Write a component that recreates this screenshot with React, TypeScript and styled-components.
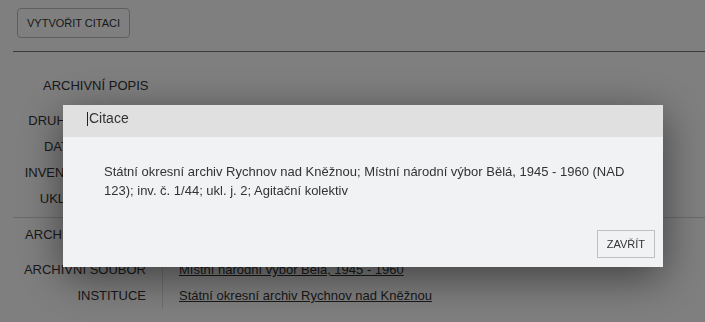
import React from "react";
import styled, { createGlobalStyle } from "styled-components";

const GlobalStyle = createGlobalStyle`
  html, body {
    margin: 0;
    padding: 0;
    background: #ffffff;
    font-family: "Liberation Sans", Arial, sans-serif;
    color: #333333;
  }
  * { box-sizing: border-box; }
`;

const Page = styled.div`
  padding: 8px 0 0 13px;
  min-height: 322px;
`;

const Toolbar = styled.div`
  display: flex;
  padding-left: 4px;
  margin-bottom: 13px;
`;

const OutlineButton = styled.button`
  height: 30px;
  padding: 0 9px;
  border: 1px solid #bdbdbd;
  border-radius: 4px;
  background: #ffffff;
  font-family: "Liberation Sans", Arial, sans-serif;
  font-size: 11px;
  color: #333333;
  cursor: pointer;
`;

const Rule = styled.div<{ $color: string }>`
  height: 1px;
  background: ${(p) => p.$color};
`;

const Heading = styled.div`
  margin: 26px 0 15px 30px;
  font-size: 13px;
  line-height: 15px;
  color: #333333;
`;

const Section = styled.div<{ $top: number; $bottom: number }>`
  display: flex;
  flex-direction: column;
  padding-top: ${(p) => p.$top}px;
  padding-bottom: ${(p) => p.$bottom}px;
`;

const Row = styled.div<{ $gap?: number }>`
  display: grid;
  grid-template-columns: 150px 1fr;
  margin-top: ${(p) => p.$gap ?? 0}px;
  font-size: 13px;
  line-height: 26px;
`;

const Label = styled.div`
  text-align: right;
  padding-right: 16px;
  border-right: 1px solid #dddddd;
  white-space: nowrap;
  color: #333333;
`;

const Value = styled.div`
  padding-left: 16px;
  color: #333333;
`;

const LinkValue = styled.a`
  color: #333333;
  text-decoration: underline;
`;

const Overlay = styled.div`
  position: fixed;
  inset: 0;
  background: rgba(0, 0, 0, 0.5);
`;

const Modal = styled.div`
  margin: 105px 0 0 63px;
  width: 600px;
  background: #f1f2f4;
  box-shadow: 0 10px 40px rgba(0, 0, 0, 0.5);
`;

const ModalHeader = styled.div`
  height: 32px;
  padding: 1px 24px 0;
  background: #dfe0df;
  font-size: 14px;
  line-height: 24px;
  color: #333333;
`;

const Caret = styled.span`
  display: inline-block;
  width: 1px;
  height: 14px;
  margin-right: 1px;
  background: #222222;
  vertical-align: -3px;
`;

const ModalBody = styled.div`
  padding: 25px 34px 0 41px;
  font-size: 13px;
  line-height: 19px;
  color: #333333;
`;

const ModalFooter = styled.div`
  display: flex;
  justify-content: flex-end;
  padding: 30px 8px 9px;
`;

const SquareButton = styled.button`
  height: 28px;
  padding: 0 9px;
  border: 1px solid #c0c0c0;
  border-radius: 0;
  background: #f1f2f4;
  font-family: "Liberation Sans", Arial, sans-serif;
  font-size: 11px;
  color: #333333;
  cursor: pointer;
`;

const firstRows = [
  "DRUH ARCHIVÁLIE",
  "DATACE VZNIKU",
  "INVENTÁRNÍ ČÍSLO",
  "UKLÁDACÍ JEDN.",
];
const firstValues = ["Písemnost", "1945 - 1960", "1/44", "2"];

export default function App() {
  return (
    <>
      <GlobalStyle />
      <Page>
        <Toolbar>
          <OutlineButton>VYTVOŘIT CITACI</OutlineButton>
        </Toolbar>
        <Rule $color="#777777" />
        <Heading>ARCHIVNÍ POPIS</Heading>
        <Section $top={0} $bottom={5}>
          {firstRows.map((l, i) => (
            <Row key={l}>
              <Label>{l}</Label>
              <Value>{firstValues[i]}</Value>
            </Row>
          ))}
        </Section>
        <Rule $color="#d6d6d6" />
        <Section $top={4} $bottom={8}>
          <Row>
            <Label>ARCHIV. POMŮCKA</Label>
            <Value>
              <LinkValue>Inventář</LinkValue>
            </Value>
          </Row>
          <Row $gap={9}>
            <Label>ARCHIVNÍ SOUBOR</Label>
            <Value>
              <LinkValue>Místní národní výbor Bělá, 1945 - 1960</LinkValue>
            </Value>
          </Row>
          <Row>
            <Label>INSTITUCE</Label>
            <Value>
              <LinkValue>Státní okresní archiv Rychnov nad Kněžnou</LinkValue>
            </Value>
          </Row>
        </Section>
      </Page>
      <Overlay>
        <Modal>
          <ModalHeader>
            <Caret />
            Citace
          </ModalHeader>
          <ModalBody>
            Státní okresní archiv Rychnov nad Kněžnou; Místní národní výbor Bělá,
            1945 - 1960 (NAD 123); inv. č. 1/44; ukl. j. 2; Agitační kolektiv
          </ModalBody>
          <ModalFooter>
            <SquareButton>ZAVŘÍT</SquareButton>
          </ModalFooter>
        </Modal>
      </Overlay>
    </>
  );
}
